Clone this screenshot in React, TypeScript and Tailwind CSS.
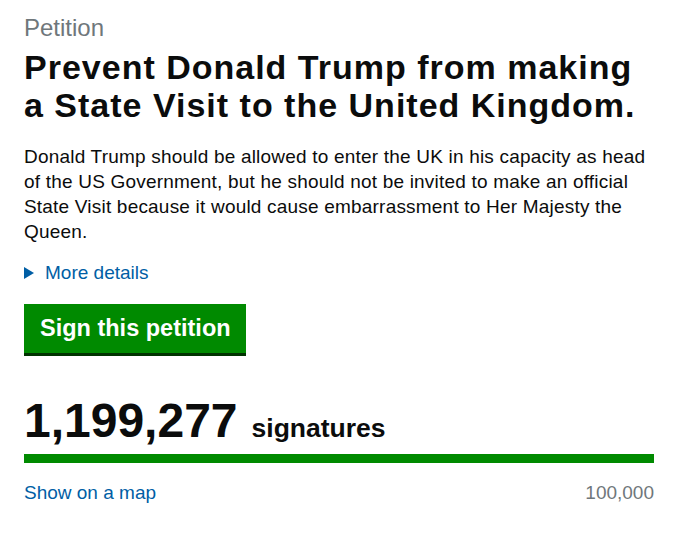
export default function App() {
  return (
    <div className="w-[695px] h-[533px] bg-white px-6 pt-[14px] font-['Liberation_Sans',Arial,sans-serif] text-[#0b0c0c]">
      <div className="w-[630px]">
        <p className="text-[24px] leading-[28px] text-[#6f777b]">Petition</p>
        <h1 className="mt-[6px] text-[34px] leading-[38px] font-bold tracking-[1px]">
          Prevent Donald Trump from making a State Visit to the United Kingdom.
        </h1>
        <p className="mt-[20px] text-[19px] leading-[25px] tracking-[0.2px]">
          Donald Trump should be allowed to enter the UK in his capacity as head of the US Government, but he should not be invited to make an official State Visit because it would cause embarrassment to Her Majesty the Queen.
        </p>
        <div className="mt-[16px] flex items-center gap-[11px] text-[19px] leading-[25px] text-[#005ea5]">
          <svg width="10" height="12" viewBox="0 0 10 12"><polygon points="0,0 10,6 0,12" fill="#005ea5" /></svg>
          <span>More details</span>
        </div>
        <button className="mt-[19px] flex h-[49px] items-center bg-[#008a00] pl-4 pr-[15px] text-[23.5px] font-bold text-white shadow-[0_3px_0_#003300]">
          Sign this petition
        </button>
        <div className="mt-[40px] flex h-[56px] items-baseline gap-[14px]">
          <span className="text-[48px] leading-[56px] font-bold">1,199,277</span>
          <span className="text-[26.5px] leading-none font-bold">signatures</span>
        </div>
        <div className="mt-[5px] h-[9px] w-full bg-[#008a00]" />
        <div className="mt-[17px] flex justify-between text-[19px] leading-[25px]">
          <span className="text-[#005ea5]">Show on a map</span>
          <span className="text-[#6f777b]">100,000</span>
        </div>
      </div>
    </div>
  );
}
